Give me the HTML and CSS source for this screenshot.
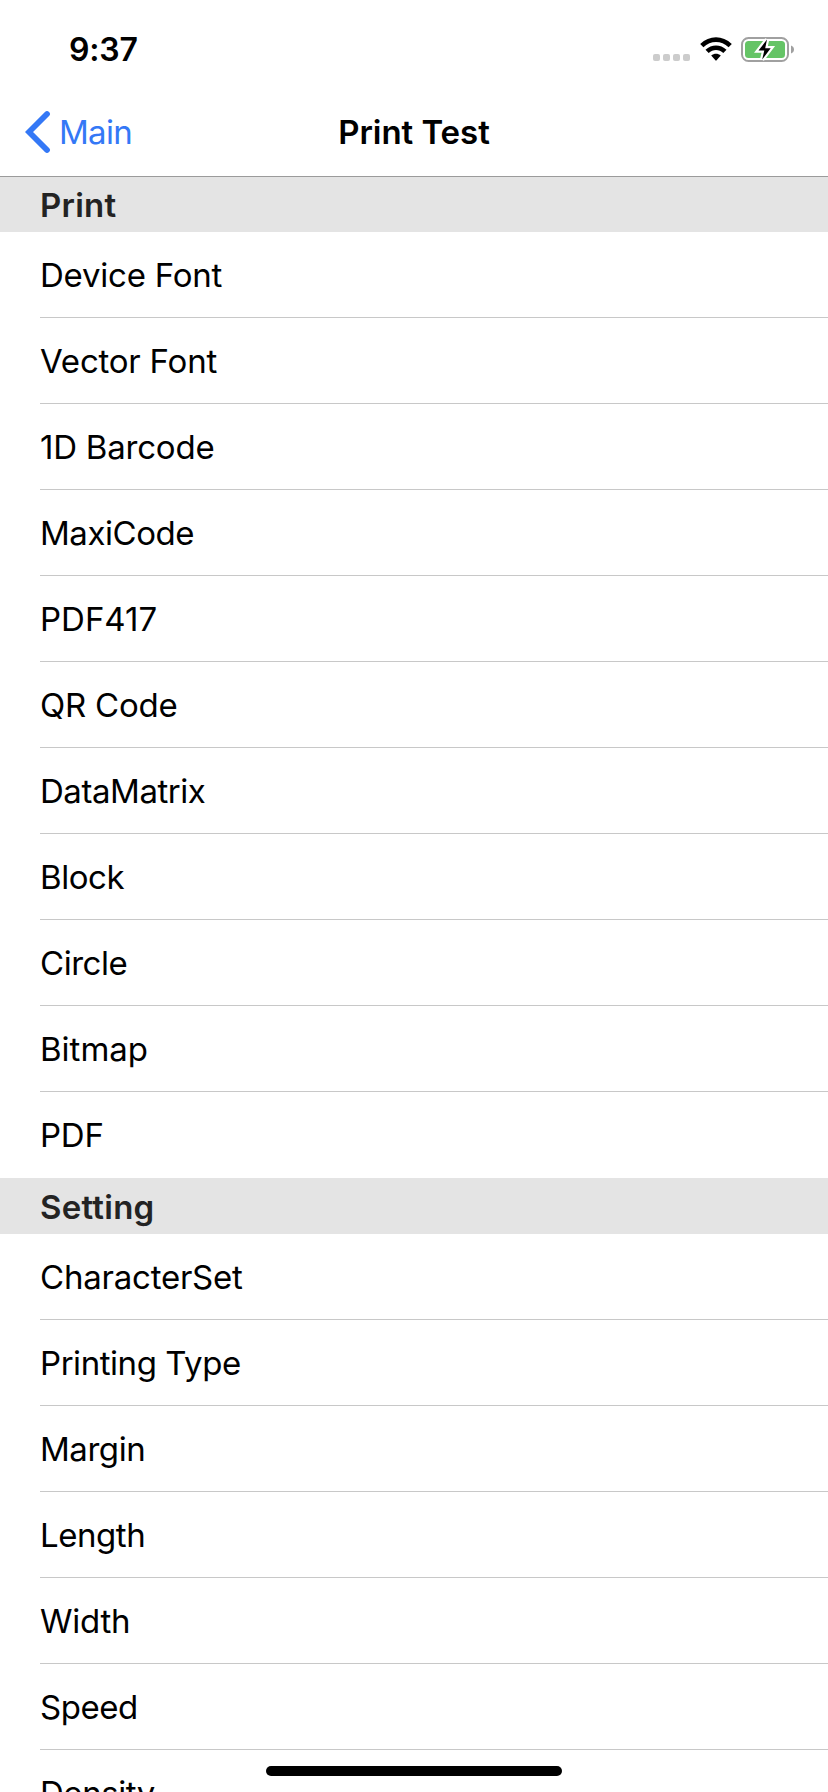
FILE: index.html
```html
<!DOCTYPE html>
<html lang="en">
<head>
<meta charset="utf-8">
<title>Print Test</title>
<link rel="stylesheet" href="styles.css">
</head>
<body>
<div class="screen">
  <header class="top">
    <div class="status">
      <span class="time">9:37</span>
      <div class="indicators">
        <div class="signal"><i class="dot"></i><i class="dot"></i><i class="dot"></i><i class="dot"></i></div>
        <svg class="wifi" width="32" height="25" viewBox="0 0 32 25">
          <path d="M.2 7C9.300-1.900 22.700-1.900 31.800 7L28.600 10.200C21.300 3.200 10.700 3.200 3.400 10.200Z"/>
          <path d="M5.500 12.700C11.600 7 20.400 7 26.500 12.700L23.300 16C19.100 12.100 12.900 12.100 8.700 16Z"/>
          <path d="M11.200 18.500C14.100 16.100 17.900 16.100 20.800 18.500L16.600 23.300Q16 24 15.400 23.300Z"/>
        </svg>
        <svg class="battery" width="54" height="30" viewBox="0 0 54 30">
          <rect x="1" y="4" width="46" height="23" rx="6.500" fill="none" stroke="#a0a0a0" stroke-width="2"/>
          <rect x="4" y="7" width="40" height="17" rx="3.500" fill="#65c466"/>
          <path d="M50 11.500Q53 12.600 53 15.500T50 19.500Z" fill="#a0a0a0"/>
          <path d="M26 5.500L17.500 16.600H23.300L21.200 25.500L29.700 14.200H24.200Z" stroke="#fff" stroke-width="4.400" paint-order="stroke"/>
        </svg>
      </div>
    </div>
    <nav class="nav">
      <a class="back">
        <svg width="26" height="44" viewBox="0 0 26 44"><path d="M22 4L4 22L22 40" fill="none" stroke="#3478f6" stroke-width="5.800" stroke-linecap="round"/></svg>
        <span class="back-label">Main</span>
      </a>
      <h1 class="title">Print Test</h1>
    </nav>
  </header>
  <main>
    <h2 class="section print">Print</h2>
    <ul class="list">
      <li class="row">Device Font</li>
      <li class="row">Vector Font</li>
      <li class="row">1D Barcode</li>
      <li class="row tight">MaxiCode</li>
      <li class="row wide">PDF417</li>
      <li class="row">QR Code</li>
      <li class="row tight">DataMatrix</li>
      <li class="row tight">Block</li>
      <li class="row tight">Circle</li>
      <li class="row wide">Bitmap</li>
      <li class="row">PDF</li>
    </ul>
    <h2 class="section">Setting</h2>
    <ul class="list">
      <li class="row">CharacterSet</li>
      <li class="row tight">Printing Type</li>
      <li class="row tight">Margin</li>
      <li class="row tight">Length</li>
      <li class="row">Width</li>
      <li class="row tight">Speed</li>
      <li class="row tight">Density</li>
    </ul>
  </main>
  <div class="home-bar"></div>
</div>
</body>
</html>
```
FILE: styles.css
```css
* { box-sizing: border-box; }
body { margin: 0; background: #fff; color: #000; font-family: Inter, "Liberation Sans", sans-serif; }
.screen { position: relative; width: 828px; height: 1792px; overflow: hidden; }
.top { height: 177px; border-bottom: 1px solid #9b9b9b; }
.status { display: flex; justify-content: space-between; height: 88px; padding: 0 33px 0 69px; }
.time { font-size: 32px; font-weight: 600; line-height: 40px; padding-top: 30px; letter-spacing: -0.2px; }
.indicators { display: flex; align-items: flex-start; }
.signal { display: flex; gap: 3px; padding-top: 54px; margin-right: 10px; }
.dot { width: 7px; height: 7px; border-radius: 2px; background: #ccc; }
.wifi { margin: 37px 9px 0 0; }
.battery { margin-top: 34px; }
.nav { display: grid; grid-template-columns: 1fr auto 1fr; height: 88px; align-items: center; }
.back { display: flex; align-items: center; padding-left: 25px; color: #3478f6; }
.back svg { flex: none; }
.back-label { font-size: 33px; line-height: 40px; margin-left: 8px; letter-spacing: -0.7px; }
.title { margin: 0; font-size: 33px; line-height: 40px; font-weight: 600; letter-spacing: -0.05px; }
.section { margin: 0; height: 56px; padding: 9px 40px 0; background: #e4e4e4; color: #232323; font-size: 33px; font-weight: 600; line-height: 40px; letter-spacing: 0.25px; }
.section.print { height: 55px; padding-top: 8px; }
.list { margin: 0; padding: 0 0 0 40px; list-style: none; }
.row { height: 86px; padding-top: 23px; border-bottom: 1px solid #c8c8c8; font-size: 33px; line-height: 40px; letter-spacing: -0.22px; }
.row.tight { letter-spacing: -0.45px; }
.row.wide { letter-spacing: 0; }
.row:last-child { border-bottom: 0; }
.home-bar { position: absolute; left: 266px; top: 1766px; width: 296px; height: 10px; border-radius: 5px; background: #000; }
```
